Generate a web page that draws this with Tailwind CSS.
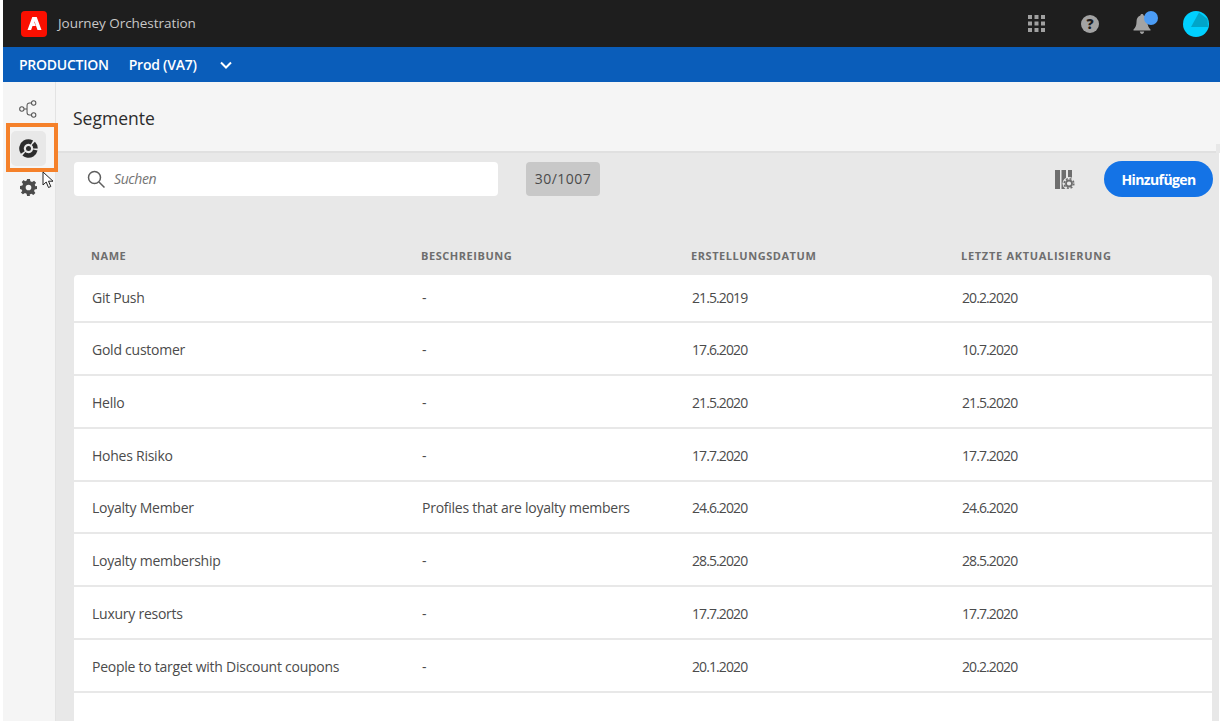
<!doctype html>
<html>
<head>
<meta charset="utf-8">
<script src="https://cdn.jsdelivr.net/npm/@tailwindcss/browser@4"></script>
</head>
<body class="bg-white overflow-hidden font-['Open_Sans',sans-serif]">
<div class="w-[1223px] h-[721px] pl-[3px] pr-[3px] flex flex-col overflow-hidden">
  <!-- Top bar -->
  <header class="h-[47px] shrink-0 bg-[#1e1e1e] flex items-center pl-[18px] pr-[10px]">
    <div class="w-[26px] h-[26px] rounded-[4px] bg-[#fa0f00] flex items-center justify-center">
      <svg width="15" height="13" viewBox="0 0 14 13" fill="#fff"><path d="M4.800 0 0 13h3.600L5 9h3.300L6.700 5 7 4.400 10 13h4L9.200 0z"/></svg>
    </div>
    <span class="ml-[11px] text-[13.5px] tracking-[-0.05px] text-[#c8c8c8]">Journey Orchestration</span>
    <div class="ml-auto flex items-center">
      <svg width="17" height="17" viewBox="0 0 17 17" fill="#a0a0a0"><rect x="0" y="0" width="4" height="4"/><rect x="6.500" y="0" width="4" height="4"/><rect x="13" y="0" width="4" height="4"/><rect x="0" y="6.500" width="4" height="4"/><rect x="6.500" y="6.500" width="4" height="4"/><rect x="13" y="6.500" width="4" height="4"/><rect x="0" y="13" width="4" height="4"/><rect x="6.500" y="13" width="4" height="4"/><rect x="13" y="13" width="4" height="4"/></svg>
      <div class="ml-[36px] w-[18px] h-[18px] rounded-full bg-[#a3a3a3] flex items-center justify-center text-[14px] leading-none font-extrabold text-[#1e1e1e]">?</div>
      <div class="relative ml-[34px] w-[18px] h-[20px]">
        <svg width="18" height="20" viewBox="0 0 18 20" fill="#a3a3a3"><path d="M9 0c1 0 1.600.7 1.600 1.600C13.600 2.500 14.500 5 14.500 8c0 3.500 1 5.500 3 7.500v1H.5v-1c2-2 3-4 3-7.500 0-3 .9-5.500 3.900-6.400C7.400.7 8 0 9 0zM6.800 17.500h4.400C11 19 10.100 20 9 20s-2-1-2.200-2.500z"/></svg>
        <span class="absolute -top-[3px] left-[11px] w-[14px] h-[14px] rounded-full bg-[#4b9cf5]"></span>
      </div>
      <svg class="ml-[32px]" width="26" height="26" viewBox="0 0 26 26"><circle cx="13" cy="13" r="13" fill="#00d0ff"/><path d="M16 1.500 24.500 8 25 16H8z" fill="#00a5c9"/></svg>
      <span class="w-[1px]"></span>
    </div>
  </header>
  <!-- Sandbox bar -->
  <div class="h-[35px] shrink-0 bg-[#0a5dba] flex items-center pl-[16px] text-white text-[14px] font-semibold tracking-[-0.25px]">
    <span>PRODUCTION</span>
    <span class="ml-[20px]">Prod (VA7)</span>
    <svg class="ml-[23px]" width="12" height="8" viewBox="0 0 12 8" fill="none" stroke="#fff" stroke-width="2"><path d="M1 1.500 6 6.500l5-5"/></svg>
  </div>
  <div class="flex flex-1 min-h-0">
    <!-- Side rail -->
    <nav class="relative z-10 w-[53px] shrink-0 bg-[#f5f5f5] border-r border-[#e3e3e3] flex flex-col items-center">
      <svg class="mt-[18px] -translate-x-[1px]" width="18" height="18" viewBox="0 0 19 19" fill="none" stroke="#555" stroke-width="1.100"><circle cx="3" cy="9.500" r="2.300"/><circle cx="15.500" cy="3.200" r="2.300"/><circle cx="15.500" cy="15.800" r="2.300"/><path d="M5.300 9.500H8.500M13.200 3.200H11a2.500 2.500 0 0 0-2.500 2.500v7.600a2.500 2.500 0 0 0 2.500 2.500h2.200"/></svg>
      <div class="relative self-start ml-[8px] mt-[13px] w-[35px] h-[35px] rounded-[5px] bg-[#e8e8e8] flex items-center justify-center">
        <svg width="19" height="19" viewBox="0 0 19 19" fill="none"><circle cx="9.500" cy="9.500" r="7" stroke="#2c2c2c" stroke-width="4.600" pathLength="360" stroke-dasharray="118 14 155 14 46 13" transform="rotate(13 9.500 9.500)"/><circle cx="9.500" cy="9.500" r="2.500" fill="#2c2c2c"/></svg>
        <span class="absolute z-20 -left-[5px] -right-[12px] -top-[8px] -bottom-[6px] border-[4px] border-[#f5812a]"></span>
      </div>
      <svg class="mt-[13px] -translate-x-[1px]" width="17" height="17" viewBox="0 0 24 24" fill="#4b4b4b"><path fill-rule="evenodd" d="M10 0h4l.7 3.300 2.300 1 2.900-1.900 2.800 2.800-1.900 2.900 1 2.300L24 10v4l-3.200.7-1 2.300 1.900 2.900-2.800 2.800-2.900-1.900-2.300 1L14 24h-4l-.7-3.200-2.300-1-2.900 1.900-2.800-2.800L3.200 17l-1-2.300L0 14v-4l3.300-.7 1-2.300-1.900-2.900 2.800-2.800L7.100 3.200l2.300-1zM12 8a4 4 0 1 0 0 8 4 4 0 0 0 0-8z"/></svg>
      <!-- mouse pointer -->
      <svg class="relative z-30 -mt-[25px] left-[19px]" width="13" height="18" viewBox="0 0 13 18" fill="#fff" stroke="#222" stroke-width="1"><path d="M1 1v13l3.200-3 2.300 5.500 2.300-1-2.300-5.300H11z"/></svg>
    </nav>
    <main class="flex-1 flex flex-col min-w-0">
      <div class="relative h-[71px] shrink-0 bg-[#f5f5f5] flex items-center pl-[17px] pt-[3px] text-[17.5px] text-[#2c2c2c] border-b-2 border-[#e0e0e0]">
        Segmente
        <span class="absolute right-0 top-[62px] -bottom-[2px] w-[4px] bg-[#e8e8e8]"></span>
      </div>
      <div class="flex-1 bg-[#e8e8e8] mr-[1px] pl-[18px] pr-[6px] min-h-0">
        <!-- Toolbar -->
        <div class="h-[36px] mt-[8px] flex items-start">
          <div class="w-[424px] h-[34px] mt-[1px] bg-white rounded-[4px] flex items-center pl-[13px]">
            <svg width="19" height="19" viewBox="0 0 19 19" fill="none" stroke="#5e5e5e" stroke-width="1.500"><circle cx="7.500" cy="7.500" r="6"/><path d="m12 12 5.500 5.500"/></svg>
            <span class="ml-[8px] pb-[2px] text-[14px] italic text-[#747474] tracking-[-0.4px]">Suchen</span>
          </div>
          <div class="ml-[28px] mt-[1px] pb-[1px] w-[74px] h-[34px] rounded-[4px] bg-[#c8c8c8] flex items-center justify-center text-[14px] text-[#4b4b4b] tracking-[0.5px]">30/1007</div>
          <svg class="ml-auto mt-[9px]" width="20" height="19" viewBox="0 0 20 19" fill="#6e6e6e"><rect x="0" y="0" width="5" height="19"/><rect x="6.500" y="0" width="4.500" height="19"/><rect x="13" y="0" width="4" height="9"/><circle cx="14" cy="13.500" r="6.500" fill="#e8e8e8"/><circle cx="14" cy="13.500" r="3" fill="none" stroke="#6e6e6e" stroke-width="1.800"/><circle cx="14" cy="13.500" r="4.800" fill="none" stroke="#6e6e6e" stroke-width="1.600" stroke-dasharray="2 1.770"/></svg>
          <button class="ml-[29px] w-[109px] h-[36px] rounded-full bg-[#1473e6] text-white text-[14px] font-bold tracking-[-0.6px]">Hinzufügen</button>
        </div>
        <!-- Column heads -->
        <div class="mt-[42px] h-[36px] grid grid-cols-[330px_270px_270px_1fr] pl-[17px] items-center text-[11px] font-bold tracking-[0.55px] text-[#6e6e6e] pb-[2px]">
          <span>NAME</span><span>BESCHREIBUNG</span><span>ERSTELLUNGSDATUM</span><span class="tracking-[0.7px]">LETZTE AKTUALISIERUNG</span>
        </div>
        <!-- Rows -->
        <div class="w-[1138px] bg-white rounded-t-[4px] h-[446px] text-[14px] tracking-[-0.25px] text-[#4b4b4b]">
          <div class="h-[48px] pb-[2px] grid grid-cols-[330px_270px_270px_1fr] pl-[18px] items-center border-b-2 border-[#e8e8e8]"><span>Git Push</span><span>-</span><span class="tracking-[-0.9px]">21.5.2019</span><span class="tracking-[-0.9px]">20.2.2020</span></div>
          <div class="h-[52.85px] pt-[2px] grid grid-cols-[330px_270px_270px_1fr] pl-[18px] items-center border-b-2 border-[#e8e8e8]"><span>Gold customer</span><span>-</span><span class="tracking-[-0.9px]">17.6.2020</span><span class="tracking-[-0.9px]">10.7.2020</span></div>
          <div class="h-[52.85px] pt-[2px] grid grid-cols-[330px_270px_270px_1fr] pl-[18px] items-center border-b-2 border-[#e8e8e8]"><span>Hello</span><span>-</span><span class="tracking-[-0.9px]">21.5.2020</span><span class="tracking-[-0.9px]">21.5.2020</span></div>
          <div class="h-[52.85px] pt-[2px] grid grid-cols-[330px_270px_270px_1fr] pl-[18px] items-center border-b-2 border-[#e8e8e8]"><span>Hohes Risiko</span><span>-</span><span class="tracking-[-0.9px]">17.7.2020</span><span class="tracking-[-0.9px]">17.7.2020</span></div>
          <div class="h-[52.85px] pt-[2px] grid grid-cols-[330px_270px_270px_1fr] pl-[18px] items-center border-b-2 border-[#e8e8e8]"><span>Loyalty Member</span><span>Profiles that are loyalty members</span><span class="tracking-[-0.9px]">24.6.2020</span><span class="tracking-[-0.9px]">24.6.2020</span></div>
          <div class="h-[52.85px] pt-[2px] grid grid-cols-[330px_270px_270px_1fr] pl-[18px] items-center border-b-2 border-[#e8e8e8]"><span>Loyalty membership</span><span>-</span><span class="tracking-[-0.9px]">28.5.2020</span><span class="tracking-[-0.9px]">28.5.2020</span></div>
          <div class="h-[52.85px] pt-[2px] grid grid-cols-[330px_270px_270px_1fr] pl-[18px] items-center border-b-2 border-[#e8e8e8]"><span>Luxury resorts</span><span>-</span><span class="tracking-[-0.9px]">17.7.2020</span><span class="tracking-[-0.9px]">17.7.2020</span></div>
          <div class="h-[52.85px] pt-[2px] grid grid-cols-[330px_270px_270px_1fr] pl-[18px] items-center border-b-2 border-[#e8e8e8]"><span>People to target with Discount coupons</span><span>-</span><span class="tracking-[-0.9px]">20.1.2020</span><span class="tracking-[-0.9px]">20.2.2020</span></div>
        </div>
      </div>
    </main>
  </div>
</div>
</body>
</html>
